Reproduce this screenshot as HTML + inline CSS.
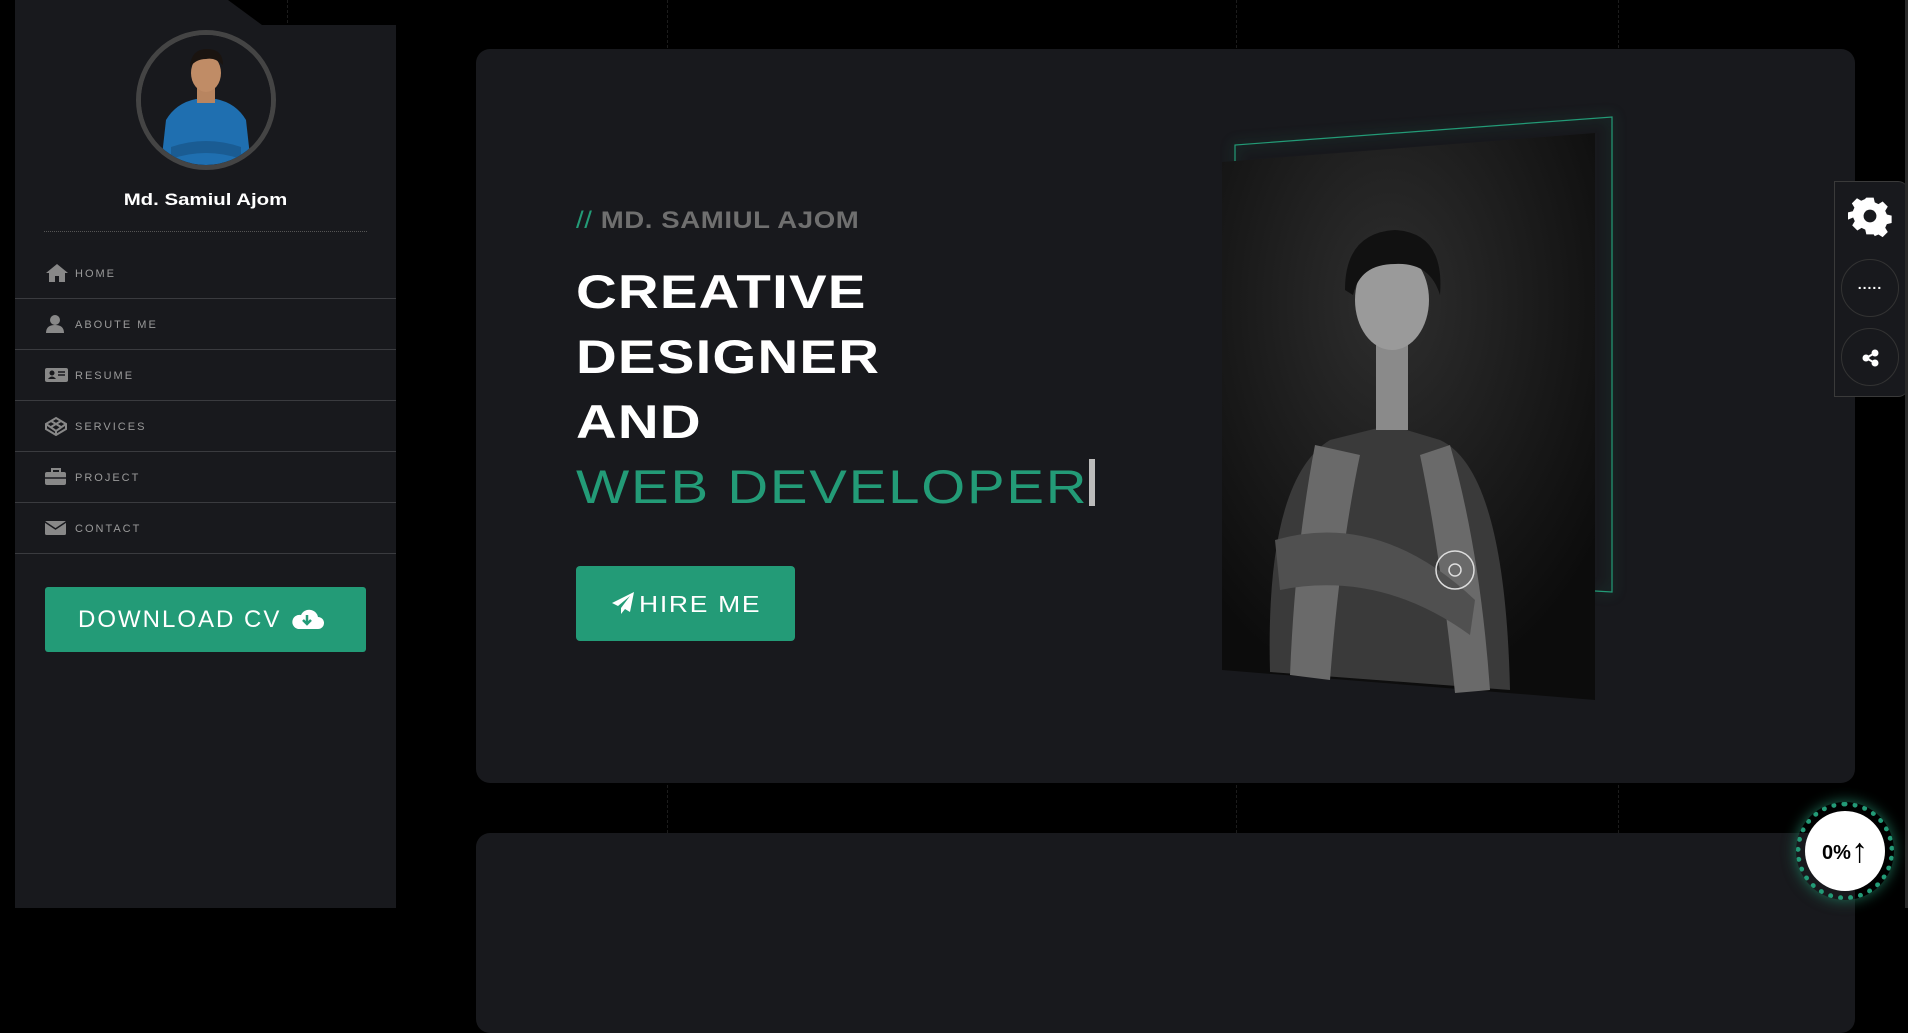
<!DOCTYPE html>
<html><head><meta charset="utf-8"><style>
*{margin:0;padding:0;box-sizing:border-box}
html{background:#000}
body{width:1908px;height:908px;background:#000;overflow:hidden;position:relative;font-family:"Liberation Sans",sans-serif}
.dl{position:absolute;top:0;height:908px;border-left:1px dashed #1c1c1c}
.side{position:absolute;left:15px;top:0;width:381px;height:908px;background:#18191d;clip-path:polygon(0 0,213px 0,247px 25px,381px 25px,381px 908px,0 908px)}
.av{position:absolute;left:121px;top:30px;width:140px;height:140px;border-radius:50%;border:5px solid #444;overflow:hidden;background:#18191d}
.name{position:absolute;left:0;width:381px;top:190px;text-align:center;color:#fff;font-weight:bold;font-size:17px;transform:scaleX(1.2)}
.hr{position:absolute;left:29px;top:231px;width:323px;border-top:1px dotted #555}
.nav{position:absolute;left:0;width:381px;height:51px;border-bottom:1px solid #3a3b3f}
.nav span{position:absolute;left:60px;top:20px;font-size:11px;letter-spacing:2px;color:#9a9a9a}
.nav svg{position:absolute;left:30px;top:15px}
.dlb{position:absolute;left:30px;top:587px;width:321px;height:65px;background:#239b77;border-radius:3px;color:#fff;font-size:24px;letter-spacing:2px;padding:19px 0 0 33px}
.card{position:absolute;left:476px;width:1379px;background:#18191d;border-radius:14px}
.h{position:absolute;left:576px;color:#fff;font-weight:bold;font-size:47px;letter-spacing:1px;line-height:1;transform:scaleX(1.2);transform-origin:0 0;white-space:nowrap}
.pn{position:absolute;left:1834px;top:181px;width:74px;height:216px;border:1px solid #3a3a3a;border-right:none;border-radius:0 10px 10px 0;background:#18191d}
.pc{position:absolute;left:6px;width:58px;height:58px;border-radius:50%;border:1px solid #333}
</style></head><body>
<div class="dl" style="left:287px"></div><div class="dl" style="left:667px"></div><div class="dl" style="left:1236px"></div><div class="dl" style="left:1618px"></div>
<div class="side">
 <div class="av"><svg width="130" height="130" viewBox="0 0 130 130"><rect width="130" height="130" fill="#18191d"/><path d="M20 130 L25 85 Q35 68 55 64 L75 64 Q95 68 105 85 L110 130Z" fill="#1f6fb0"/><path d="M30 112 Q65 100 100 112 L100 124 Q65 112 30 124Z" fill="#1a5c93"/><rect x="56" y="50" width="18" height="18" fill="#b88560"/><ellipse cx="65" cy="38" rx="15" ry="19" fill="#c08c66"/><path d="M49 32 Q50 14 66 14 Q82 14 82 30 Q74 22 65 24 Q55 24 49 32Z" fill="#1a1410"/></svg></div>
 <div class="name">Md. Samiul Ajom</div>
 <div class="hr"></div>
 <div class="nav" style="top:248px"><svg width="24" height="20" viewBox="0 0 24 20"><path d="M12 1L1 10h3v9h6v-6h4v6h6v-9h3z" fill="#888"/></svg><span>HOME</span></div>
 <div class="nav" style="top:299px"><svg width="20" height="20" viewBox="0 0 20 20"><circle cx="10" cy="6" r="5" fill="#888"/><path d="M1 19q0-8 9-8t9 8z" fill="#888"/></svg><span>ABOUTE ME</span></div>
 <div class="nav" style="top:350px"><svg width="24" height="20" viewBox="0 0 24 20"><rect x="0" y="3" width="23" height="14" rx="2" fill="#888"/><circle cx="7" cy="8" r="2.5" fill="#18191d"/><path d="M3 14q4-5 8 0z" fill="#18191d"/><path d="M13 7h7M13 10h7" stroke="#18191d" stroke-width="1.5"/></svg><span>RESUME</span></div>
 <div class="nav" style="top:401px"><svg width="22" height="20" viewBox="0 0 22 20"><path d="M11 2L21 8 11 15 1 8Z M1 8v5l10 6 10-6V8 M11 15v4 M6 5l10 6 M16 5 6 11" fill="none" stroke="#888" stroke-width="2"/></svg><span>SERVICES</span></div>
 <div class="nav" style="top:452px"><svg width="22" height="20" viewBox="0 0 22 20"><path d="M7 5V2h8v3" fill="none" stroke="#888" stroke-width="2"/><rect x="0" y="5" width="21" height="13" rx="2" fill="#888"/><path d="M0 11h21" stroke="#18191d" stroke-width="1.5"/></svg><span>PROJECT</span></div>
 <div class="nav" style="top:503px"><svg width="22" height="20" viewBox="0 0 22 20"><rect x="0" y="3" width="21" height="14" rx="1.5" fill="#888"/><path d="M0 4l10.5 7L21 4" fill="none" stroke="#18191d" stroke-width="1.5"/></svg><span>CONTACT</span></div>
 <div class="dlb">DOWNLOAD CV <svg width="34" height="22" viewBox="0 0 34 22" style="vertical-align:-3px"><path d="M8 21h20a6 6 0 0 0 0-12 9 9 0 0 0-17-2 7 7 0 0 0-3 14z" fill="#fff"/><path d="M17 7v9M13 12l4 4 4-4" stroke="#239b77" stroke-width="2.5" fill="none"/></svg></div>
</div>
<div class="card" style="top:49px;height:734px"></div>
<div class="card" style="top:833px;height:200px"></div>
<div style="position:absolute;left:576px;top:207px;font-size:24px;color:#6f6f6f;letter-spacing:.5px;font-weight:bold;transform:scaleX(1.15);transform-origin:0 0;white-space:nowrap"><span style="color:#239b77;font-weight:normal">//</span> MD. SAMIUL AJOM</div>
<div class="h" style="top:268px">CREATIVE</div>
<div class="h" style="top:333px">DESIGNER</div>
<div class="h" style="top:398px">AND</div>
<div class="h" style="top:463px;color:#239b77;font-weight:normal;letter-spacing:1.5px">WEB DEVELOPER</div>
<div style="position:absolute;left:1089px;top:459px;width:6px;height:47px;background:#bbb"></div>
<div style="position:absolute;left:576px;top:566px;width:219px;height:75px;background:#239b77;border-radius:4px;color:#fff;font-size:23px;letter-spacing:1.5px;padding:25px 0 0 35px"><svg width="24" height="24" viewBox="0 0 24 24" style="position:absolute;left:35px;top:25px"><path d="M23 1L1 12l6 3 12-10-9 12v6l4-5 5 3z" fill="#fff"/></svg><span style="margin-left:28px;display:inline-block;transform:scaleX(1.15);transform-origin:0 0">HIRE ME</span></div>
<svg style="position:absolute;left:1200px;top:100px" width="460" height="620" viewBox="1200 100 460 620">
 <defs><radialGradient id="g" cx="0.45" cy="0.3" r="0.7"><stop offset="0" stop-color="#2e2e2e"/><stop offset="1" stop-color="#0c0c0c"/></radialGradient></defs>
 <polyline points="1235,170 1235,145 1612,117 1612,592 1595,591" fill="none" stroke="#239b77" stroke-width="1.2" style="filter:drop-shadow(0 0 6px #1d6e55)"/>
 <polygon points="1222,162 1595,133 1595,700 1222,670" fill="url(#g)"/>
 <path d="M1270 672 Q1265 480 1330 440 L1390 425 L1440 440 Q1505 470 1510 690 Z" fill="#3a3a3a"/>
 <path d="M1315 445 Q1295 550 1290 675 L1330 680 Q1340 550 1360 455Z M1450 445 Q1480 550 1490 690 L1455 693 Q1440 550 1420 455Z" fill="#6a6a6a"/>
 <path d="M1275 540 Q1380 510 1475 600 L1470 635 Q1380 570 1280 590Z" fill="#505050"/>
 <rect x="1376" y="340" width="32" height="90" fill="#8a8a8a"/>
 <ellipse cx="1392" cy="300" rx="37" ry="50" fill="#9a9a9a"/>
 <path d="M1345 290 Q1345 233 1395 230 Q1445 233 1440 295 Q1430 262 1395 264 Q1360 264 1353 295Z" fill="#111"/>
 <circle cx="1455" cy="570" r="19" fill="none" stroke="#ddd" stroke-width="1.5"/><circle cx="1455" cy="570" r="6" fill="none" stroke="#ddd" stroke-width="1.5"/>
</svg>
<div class="pn"><svg width="44" height="44" viewBox="0 0 24 24" style="position:absolute;left:13px;top:12px"><path d="M10 2h4l.6 2.6 2 .9 2.3-1.4 2.8 2.8-1.4 2.3.9 2 2.6.6v4l-2.6.6-.9 2 1.4 2.3-2.8 2.8-2.3-1.4-2 .9L14 22h-4l-.6-2.6-2-.9-2.3 1.4-2.8-2.8 1.4-2.3-.9-2L0 14v-4l2.6-.6.9-2-1.4-2.3 2.8-2.8 2.3 1.4 2-.9z" fill="#fff"/><circle cx="12" cy="12" r="3.5" fill="#18191d"/></svg>
 <div class="pc" style="top:77px;color:#fff;text-align:center;font-size:14px;line-height:48px;letter-spacing:1px;font-weight:bold">.....</div>
 <div class="pc" style="top:146px"><svg width="20" height="20" viewBox="0 0 20 20" style="position:absolute;left:19px;top:19px"><circle cx="14" cy="5" r="3.5" fill="#fff"/><circle cx="14" cy="15" r="3.5" fill="#fff"/><circle cx="5" cy="10" r="3.5" fill="#fff"/><path d="M14 5L5 10l9 5" stroke="#fff" stroke-width="2" fill="none"/></svg></div>
</div>
<div style="position:absolute;left:1905px;top:0;width:3px;height:908px;background:#2a2a2a"></div>
<div style="position:absolute;left:1796px;top:802px;width:98px;height:98px;border-radius:50%;border:5px dotted #239b77;box-shadow:0 0 14px #1d6e55"></div>
<div style="position:absolute;left:1805px;top:811px;width:80px;height:80px;border-radius:50%;background:#fff;color:#000;font-size:20px;font-weight:bold;text-align:center;line-height:80px">0%<b style="font-size:34px;vertical-align:-3px">↑</b></div>
</body></html>
